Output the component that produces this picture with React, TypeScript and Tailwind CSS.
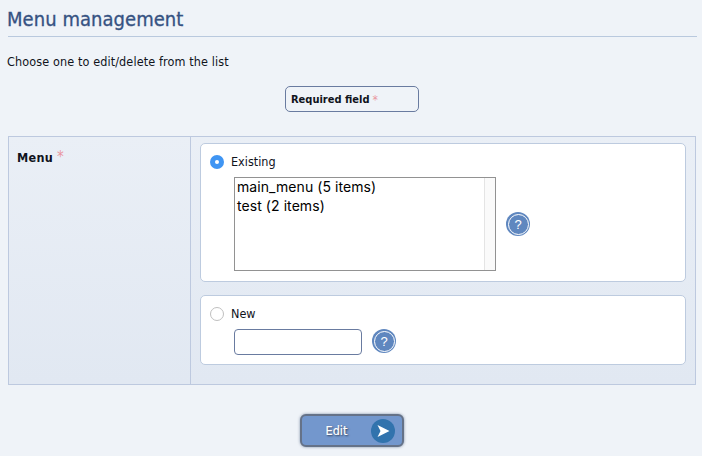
import React from "react";

function Help() {
  return (
    <span className="flex size-6 shrink-0 items-center justify-center rounded-full bg-[#5f87bf]">
      <span className="flex size-[21px] items-center justify-center rounded-full border-[1.5px] border-white font-['Liberation_Sans',sans-serif] text-[13px] leading-none text-white">
        ?
      </span>
    </span>
  );
}

export default function App() {
  return (
    <div className="h-[456px] w-[702px] overflow-hidden bg-[#eff3f8] font-['DejaVu_Sans_Condensed','DejaVu_Sans',sans-serif] text-[12.5px] text-[#10131c]">
      <div className="ml-2 w-[689px]">
        <h1 className="h-[37px] border-b border-[#b9c9de] pt-[5px] text-[20px] leading-7 tracking-[0.05px] whitespace-nowrap text-[#365282] [-webkit-text-stroke:0.3px_#365282]">
          <span className="-ml-px">Menu management</span>
        </h1>
        <p className="mt-4 -ml-px h-[33px] leading-[18px] tracking-[0.12px] whitespace-nowrap">
          Choose one to edit/delete from the list
        </p>
      </div>
      <div className="ml-[285px] flex h-[26px] w-[134px] items-center rounded-[5px] border border-[#697ba0] pt-0.5 pl-[5px] text-[11px] font-bold whitespace-nowrap">
        <span className="pt-px">Required field</span>
        <span className="ml-[3px] text-[12px] font-normal text-[#e9979f]">*</span>
      </div>
      <div className="mt-6 ml-2 flex h-[249px] w-[688px] border border-[#bdc9df] bg-linear-to-b from-[#eaeff6] to-[#e1e8f2]">
        <div className="w-[182px] border-r border-[#bdc9df] pt-3 pl-2 leading-4 font-bold">
          <span className="tracking-[0.3px]">Menu</span>
          <span className="ml-1 text-[15px] font-normal text-[#e9979f]">*</span>
        </div>
        <div className="flex flex-col gap-[13px] pt-1.5 pl-[9px]">
          <section className="h-[139px] w-[486px] rounded-[5px] border border-[#bdcbdf] bg-white pl-[9px]">
            <label className="flex h-[33px] items-center pt-0.5">
              <span className="flex size-3.5 items-center justify-center rounded-full bg-[#3f95f3]">
                <span className="size-1 rounded-full bg-white" />
              </span>
              <span className="ml-[7px] pt-0.5">Existing</span>
            </label>
            <div className="ml-6 flex items-center gap-2.5">
              <div className="flex h-[94px] w-[262px] justify-between border border-[#929292] bg-white font-['Inter',sans-serif] text-[14px] leading-[19px] text-black">
                <div className="-mt-px pl-0.5 tracking-[0.07px] whitespace-nowrap">
                  <div>main_menu (5 items)</div>
                  <div>test (2 items)</div>
                </div>
                <div className="w-[11px] border-l border-[#e4e4e4] bg-[#fafafa]" />
              </div>
              <Help />
            </div>
          </section>
          <section className="h-[70px] w-[486px] rounded-[5px] border border-[#bdcbdf] bg-white pl-[9px]">
            <label className="flex h-[33px] items-center pt-0.5">
              <span className="size-3.5 rounded-full border border-[#bfbfbf] bg-white" />
              <span className="ml-[7px] pt-0.5">New</span>
            </label>
            <div className="ml-6 flex items-start gap-2.5">
              <div className="h-[26px] w-32 rounded-[4px] border border-[#697ba0] bg-white" />
              <Help />
            </div>
          </section>
        </div>
      </div>
      <button className="mt-[29px] ml-[300px] flex h-[33px] w-[104px] items-center rounded-[6px] border-2 border-[#657288] bg-[#7397cd] pl-[23px] text-white shadow-[0_0_3px_#8090a8]">
        <span className="w-[23px] pt-px whitespace-nowrap [text-shadow:1px_1px_2px_#26354f] [-webkit-text-stroke:0.2px_white]">Edit</span>
        <svg className="ml-[23px] size-6" viewBox="0 0 24 24">
          <circle cx="12" cy="12" r="12" fill="#3173ad" />
          <path d="M6.5 6 L18.5 12 L6.5 18 L9.5 12 Z" fill="white" />
        </svg>
      </button>
    </div>
  );
}
